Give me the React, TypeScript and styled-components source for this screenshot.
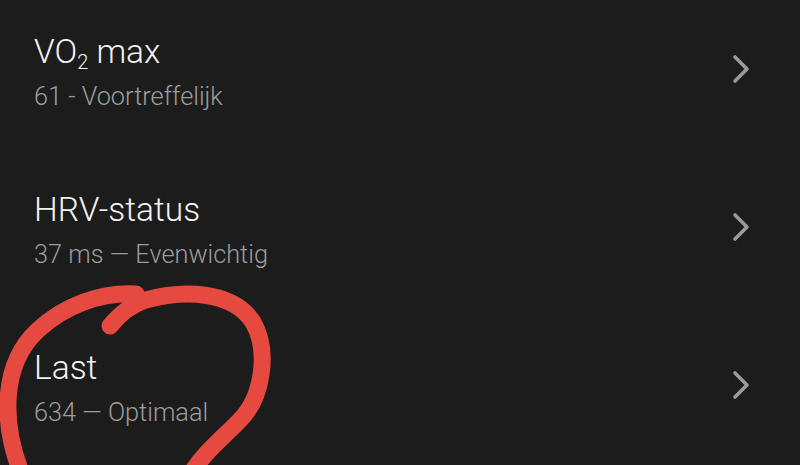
import styled, { createGlobalStyle } from 'styled-components';

const GlobalStyle = createGlobalStyle`
  html, body {
    margin: 0;
    padding: 0;
    background: #1c1c1c;
  }
  body {
    font-family: "Roboto Light", Roboto, "Noto Sans", sans-serif;
  }
`;

interface Metric {
  title: React.ReactNode;
  detail: string;
}

const metrics: Metric[] = [
  {
    title: (
      <>
        VO<sub>2</sub> max
      </>
    ),
    detail: '61 - Voortreffelijk',
  },
  { title: 'HRV-status', detail: '37 ms — Evenwichtig' },
  { title: 'Last', detail: '634 — Optimaal' },
];

export default function App() {
  return (
    <>
      <GlobalStyle />
      <Screen>
        <List>
          {metrics.map((m, i) => (
            <Row key={i}>
              <TextBlock>
                <Title>{m.title}</Title>
                <Detail>{m.detail}</Detail>
              </TextBlock>
              <Chevron width="20" height="32" viewBox="0 0 20 32">
                <path
                  d="M4 4 L16 16 L4 28"
                  fill="none"
                  stroke="#9b9b9b"
                  strokeWidth="3.6"
                  strokeLinecap="round"
                  strokeLinejoin="round"
                />
              </Chevron>
            </Row>
          ))}
        </List>
        <Scribble width="800" height="465" viewBox="0 0 800 465">
          <g fill="none" stroke="#e5493f" strokeWidth="17" strokeLinecap="round">
            <path d="M22 475 C2 425, 0 365, 38 330 C64 306, 100 292, 136 294" />
            <path d="M110 326 C119 315, 130 305, 146 300 C182 290, 232 290, 253 322 C270 352, 262 398, 240 420 C224 437, 204 452, 190 475" />
          </g>
        </Scribble>
      </Screen>
    </>
  );
}

const Screen = styled.div`
  position: relative;
  width: 800px;
  height: 465px;
  overflow: hidden;
  background: #1c1c1c;
`;

const List = styled.div`
  display: flex;
  flex-direction: column;
  gap: 77px;
  padding: 32px 49px 0 34px;
`;

const Row = styled.div`
  display: flex;
  align-items: center;
  justify-content: space-between;
  height: 81px;
`;

const TextBlock = styled.div`
  display: flex;
  flex-direction: column;
`;

const Title = styled.div`
  font-size: 33.5px;
  line-height: 40px;
  font-weight: 300;
  color: #f2f2f2;

  sub {
    font-size: 20px;
    vertical-align: -6px;
    line-height: 0;
  }
`;

const Detail = styled.div`
  margin-top: 9px;
  font-size: 25.3px;
  line-height: 32px;
  font-weight: 300;
  color: #9c9c9c;
`;

const Chevron = styled.svg`
  margin-bottom: 8px;
`;

const Scribble = styled.svg`
  position: absolute;
  left: 0;
  top: 0;
  pointer-events: none;
`;
